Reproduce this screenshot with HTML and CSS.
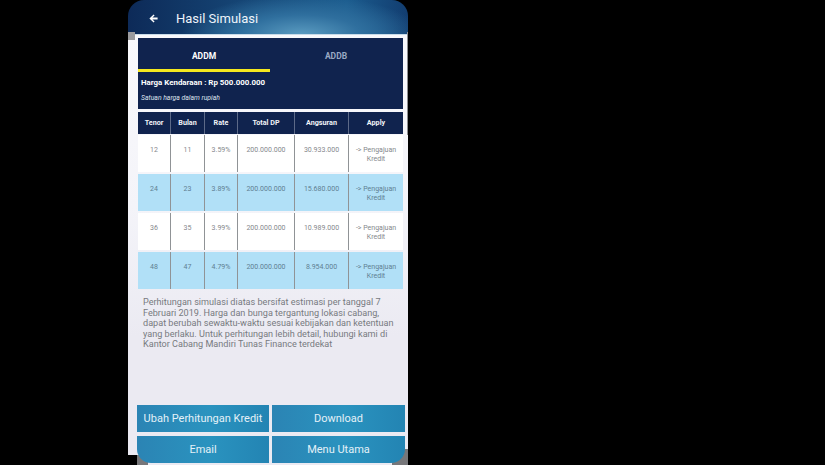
FILE: index.html
```html
<!DOCTYPE html>
<html lang="en">
<head>
  <meta charset="UTF-8">
  <meta name="viewport" content="width=device-width, initial-scale=1.0">
  <title>Hasil Simulasi</title>
  <link rel="stylesheet" href="styles.css">
</head>
<body>
  <div class="phone">
    <header class="app-bar">
      <svg class="back-icon" width="9" height="9" viewBox="0 0 9 9" aria-hidden="true">
        <path d="M4.6 0.4 L0.4 4.5 L4.6 8.6 L5.6 7.6 L3.4 5.5 L8.6 5.5 L8.6 3.5 L3.4 3.5 L5.6 1.4 Z" fill="#fff"/>
      </svg>
      <h1 class="app-title">Hasil Simulasi</h1>
    </header>

    <main class="content">
      <section class="summary">
        <div class="tabs">
          <div class="tab tab-active">ADDM</div>
          <div class="tab">ADDB</div>
        </div>
        <p class="price">Harga Kendaraan : Rp 500.000.000</p>
        <p class="unit">Satuan harga dalam rupiah</p>
      </section>

      <div class="sim-table">
        <div class="sim-row sim-head">
          <div>Tenor</div><div>Bulan</div><div>Rate</div><div>Total DP</div><div>Angsuran</div><div>Apply</div>
        </div>
        <div class="sim-row">
          <div>12</div><div>11</div><div>3.59%</div><div>200.000.000</div><div>30.933.000</div><div>-&gt; Pengajuan Kredit</div>
        </div>
        <div class="sim-row sim-alt">
          <div>24</div><div>23</div><div>3.89%</div><div>200.000.000</div><div>15.680.000</div><div>-&gt; Pengajuan Kredit</div>
        </div>
        <div class="sim-row">
          <div>36</div><div>35</div><div>3.99%</div><div>200.000.000</div><div>10.989.000</div><div>-&gt; Pengajuan Kredit</div>
        </div>
        <div class="sim-row sim-alt">
          <div>48</div><div>47</div><div>4.79%</div><div>200.000.000</div><div>8.954.000</div><div>-&gt; Pengajuan Kredit</div>
        </div>
      </div>

      <p class="note">Perhitungan simulasi diatas bersifat estimasi per tanggal 7 Februari 2019. Harga dan bunga tergantung lokasi cabang, dapat berubah sewaktu-waktu sesuai kebijakan dan ketentuan yang berlaku. Untuk perhitungan lebih detail, hubungi kami di Kantor Cabang Mandiri Tunas Finance terdekat</p>

      <div class="actions">
        <button class="action">Ubah Perhitungan Kredit</button>
        <button class="action">Download</button>
        <button class="action action-left">Email</button>
        <button class="action action-right">Menu Utama</button>
      </div>
    </main>
  </div>
</body>
</html>
```

FILE: styles.css
```css
body {
  margin: 0;
  background-color: #000;
  font-family: Roboto, "Liberation Sans", sans-serif;
  overflow: hidden;
}

.phone {
  position: relative;
  width: 280px;
  height: 465px;
  margin-left: 128px;
  display: flex;
  flex-direction: column;
}

/* grey square at the top left edge of the screen */
.phone::before {
  content: "";
  position: absolute;
  z-index: 1;
  left: 0;
  top: 32px;
  width: 7px;
  height: 8px;
  background-color: #9b9b9e;
}

/* thin grey strip on the right edge */
.phone::after {
  content: "";
  position: absolute;
  z-index: 1;
  right: 0;
  top: 32px;
  width: 1px;
  height: 103px;
  background-color: #8f8f92;
}

.app-bar {
  height: 35px;
  flex: none;
  display: flex;
  align-items: center;
  padding: 1px 0 0 21px;
  box-sizing: border-box;
  border-radius: 16px 16px 0 0;
  background: radial-gradient(ellipse 120px 40px at 62% 100%, #5b9cc1 0%, #2f6f9e 50%, transparent 100%),
    linear-gradient(90deg, #0d2a58 0%, #164878 45%, #1b5c8e 78%, #123d70 100%);
}

.back-icon {
  flex: none;
}

.app-title {
  margin: 0 0 0 18px;
  font-size: 13px;
  font-weight: 400;
  color: #eef4fa;
}

.content {
  position: relative;
  flex: 1;
  display: flex;
  flex-direction: column;
  padding: 3px 3px 2px 9px;
  background: linear-gradient(180deg, #f9f9fc 0%, #f4f4f9 40%, #ebeaf2 70%);
  border-top: 1px solid #c9dcea;
  margin-top: -1px;
}

/* grey scraps around the bottom corners of the screen */
.content::before {
  content: "";
  position: absolute;
  left: 0;
  bottom: 0;
  width: 20px;
  height: 10px;
  background: linear-gradient(90deg, #000 9px, #77777a 9px);
}

.content::after {
  content: "";
  position: absolute;
  right: 0;
  bottom: 0;
  width: 16px;
  height: 16px;
  background-color: #77777a;
}

/* top panel with tabs */
.summary {
  width: 265px;
  height: 71px;
  margin-left: 1px;
  background-color: #10234e;
  color: #fff;
}

.tabs {
  display: flex;
  height: 34px;
}

.tab {
  width: 132px;
  height: 31px;
  line-height: 36px;
  text-align: center;
  font-size: 8.5px;
  font-weight: 700;
  color: #9aa9c4;
}

.tab-active {
  color: #fff;
  border-bottom: 3px solid #f5e81e;
}

.price {
  margin: 6px 0 0 3px;
  font-size: 7.9px;
  font-weight: 700;
  line-height: 10px;
}

.unit {
  margin: 6px 0 0 3px;
  font-size: 6.8px;
  font-style: italic;
  line-height: 8px;
  color: #dfe4ee;
}

/* simulation table */
.sim-table {
  width: 265px;
  margin: 3px 0 0 1px;
  display: flex;
  flex-direction: column;
  gap: 2px;
}

.sim-row {
  display: grid;
  grid-template-columns: 32px 34px 33px 57px 54px 55px;
  height: 37px;
  background-color: #fff;
  color: #85888c;
  font-size: 7px;
  text-align: center;
  line-height: 8.5px;
}

.sim-row > div {
  padding: 11px 2px 0;
  box-sizing: border-box;
  border-left: 1px solid #909396;
}

.sim-row > div:first-child {
  border-left: none;
}

.sim-alt {
  background-color: #b1e0f7;
  color: #5f7f92;
}

.sim-head {
  height: 22px;
  margin-bottom: -1px;
  background-color: #10234e;
  color: #f1f3f8;
  font-size: 7.2px;
  font-weight: 700;
}

.sim-head > div {
  padding-top: 7px;
  border-left-color: #5d6a88;
}

.note {
  margin: 8px 7px 0 6px;
  font-size: 9.1px;
  line-height: 10.5px;
  color: #777a80;
}

/* bottom buttons */
.actions {
  position: relative;
  z-index: 1;
  margin-top: auto;
  display: grid;
  grid-template-columns: 132px 133px;
  grid-auto-rows: 27px;
  gap: 4px 3px;
}

.action {
  padding: 0;
  border: none;
  font-family: inherit;
  font-size: 11px;
  color: #e4f1f8;
  background: linear-gradient(90deg, #2b84b4 0%, #2a93bf 55%, #2384b3 100%);
}

.action-left {
  border-bottom-left-radius: 14px;
}

.action-right {
  border-bottom-right-radius: 14px;
}
```
